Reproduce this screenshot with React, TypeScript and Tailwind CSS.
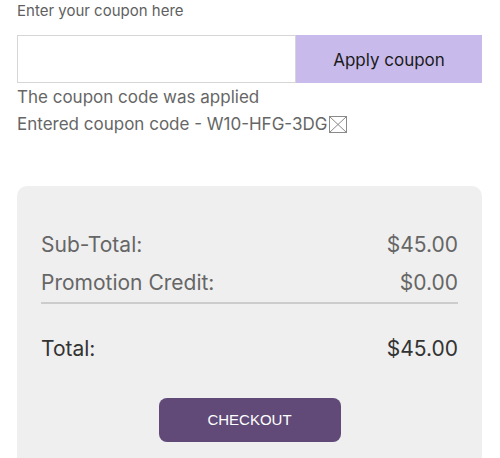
import React from "react";

export default function App() {
  return (
    <div className="w-[500px] h-[458px] overflow-hidden bg-white px-[17px] pr-[18px] font-['Inter',sans-serif]">
      <div className="pt-[0px] text-[15px] leading-[21px] text-[#5f5f5f]">Enter your coupon here</div>
      <div className="mt-[14px] flex h-[48px]">
        <input
          className="flex-1 min-w-0 border border-[#d6d6d6] bg-white outline-none px-3"
          aria-label="Coupon code"
        />
        <button className="w-[186px] bg-[#c9baec] pt-[3px] text-[17px] text-[#1a1a1a]">Apply coupon</button>
      </div>
      <div className="mt-[1px] text-[17px] leading-[27px] text-[#666]">The coupon code was applied</div>
      <div className="flex items-center text-[17px] leading-[27px] text-[#666]">
        <span>Entered coupon code - W10-HFG-3DG</span>
        <svg className="ml-[2px]" width="18" height="17" viewBox="0 0 18 17" fill="none" stroke="#8a8a8a" strokeWidth="1">
          <rect x="0.5" y="0.5" width="17" height="16" />
          <path d="M1 1 L17 16 M17 1 L1 16" />
        </svg>
      </div>
      <div className="mt-[48px] rounded-t-[10px] bg-[#efefef] px-[24px] pt-[40px] pb-[40px]">
        <div className="flex justify-between text-[21px] leading-[38px] text-[#666]">
          <span>Sub-Total:</span>
          <span>$45.00</span>
        </div>
        <div className="flex justify-between border-b-2 border-[#cccccc] pb-0 text-[21px] leading-[38px] text-[#666]">
          <span>Promotion Credit:</span>
          <span>$0.00</span>
        </div>
        <div className="mt-[26px] flex justify-between text-[21px] leading-[38px] text-[#333]">
          <span>Total:</span>
          <span>$45.00</span>
        </div>
        <div className="mt-[30px] flex justify-center">
          <button className="h-[44px] w-[182px] rounded-[8px] bg-[#614a78] font-['Liberation_Sans',Arial,sans-serif] text-[15px] text-white">
            CHECKOUT
          </button>
        </div>
      </div>
    </div>
  );
}
